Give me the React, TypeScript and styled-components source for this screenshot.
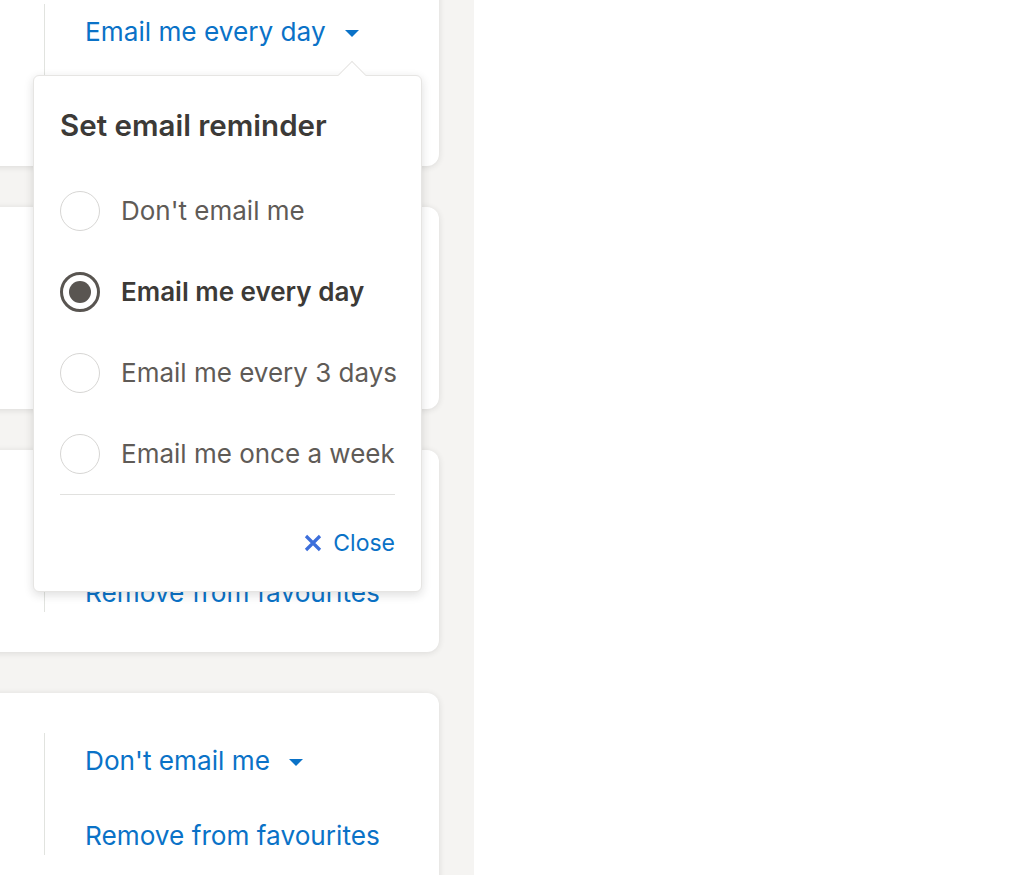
import React from "react";
import styled, { createGlobalStyle } from "styled-components";

const GlobalStyle = createGlobalStyle`
  html, body { margin: 0; padding: 0; background: #ffffff; }
  body { font-family: Inter, "Noto Sans", sans-serif; overflow: hidden; }
  * { box-sizing: border-box; }
`;

const Page = styled.div`
  display: flex;
  height: 875px;
  overflow: hidden;
  background: #ffffff;
`;

const Column = styled.div`
  width: 474px;
  flex: none;
  background: #f5f4f2;
  padding-right: 35px;
  display: flex;
  flex-direction: column;
  gap: 41px;
  margin-top: -36px;
`;

const Card = styled.div`
  margin-left: -24px;
  height: 202px;
  flex: none;
  background: #ffffff;
  border-radius: 12px;
  box-shadow: 0 1px 6px rgba(34, 34, 34, 0.12);
  padding: 40px 0 40px 68px;
  display: flex;
`;

const Actions = styled.div`
  position: relative;
  height: 122px;
  border-left: 1px solid #e1e3df;
  padding: 10px 0 1px 40px;
  display: flex;
  flex-direction: column;
  justify-content: space-between;
  align-items: flex-start;
`;

const LinkButton = styled.button`
  font-family: inherit;
  font-size: 26.2px;
  line-height: 36px;
  color: #0a72c7;
  background: none;
  border: 0;
  padding: 0;
  display: flex;
  align-items: center;
  gap: 19px;
  cursor: pointer;
  white-space: nowrap;
`;

const Caret = styled.span`
  width: 0;
  height: 0;
  border-left: 7px solid transparent;
  border-right: 7px solid transparent;
  border-top: 7px solid #0a72c7;
  margin-top: 3px;
`;

const Popover = styled.div`
  position: absolute;
  left: -12px;
  top: 71px;
  width: 389px;
  height: 517px;
  background: #ffffff;
  border: 1px solid #e6e5e3;
  border-radius: 6px;
  box-shadow: 0 3px 10px rgba(34, 34, 34, 0.15);
  padding: 29px 26px 0 26px;
  z-index: 5;
  display: flex;
  flex-direction: column;
`;

const Arrow = styled.span`
  position: absolute;
  top: -11px;
  left: 308px;
  width: 20px;
  height: 20px;
  background: #ffffff;
  border-top: 1px solid #e6e5e3;
  border-left: 1px solid #e6e5e3;
  transform: rotate(45deg);
`;

const Title = styled.h2`
  margin: 0;
  font-size: 29.5px;
  line-height: 40px;
  font-weight: 600;
  color: #3c3a37;
  white-space: nowrap;
`;

const Options = styled.div`
  margin-top: 46px;
  display: flex;
  flex-direction: column;
  gap: 41px;
  padding-bottom: 20px;
  border-bottom: 1px solid #e1e1df;
`;

const Option = styled.label`
  display: flex;
  align-items: center;
  gap: 21px;
  height: 40px;
  cursor: pointer;
`;

const Radio = styled.span<{ $checked?: boolean }>`
  width: 40px;
  height: 40px;
  flex: none;
  border-radius: 50%;
  border: ${(p) => (p.$checked ? "3px solid #595551" : "1px solid #d7d6d4")};
  display: flex;
  align-items: center;
  justify-content: center;
  &::after {
    content: "";
    display: ${(p) => (p.$checked ? "block" : "none")};
    width: 22px;
    height: 22px;
    border-radius: 50%;
    background: #595551;
  }
`;

const OptionText = styled.span<{ $checked?: boolean }>`
  font-size: 26px;
  line-height: 36px;
  white-space: nowrap;
  font-weight: ${(p) => (p.$checked ? 600 : 400)};
  color: ${(p) => (p.$checked ? "#3c3a37" : "#5f5b57")};
`;

const Footer = styled.div`
  display: flex;
  justify-content: flex-end;
  padding-top: 30px;
`;

const CloseButton = styled.button`
  font-family: inherit;
  font-size: 23px;
  line-height: 36px;
  color: #0a72c7;
  background: none;
  border: 0;
  padding: 0;
  display: flex;
  align-items: center;
  gap: 11px;
  cursor: pointer;
`;

const options = [
  "Don't email me",
  "Email me every day",
  "Email me every 3 days",
  "Email me once a week",
];

const cards = ["Email me every day", "Email me every day", "Email me every day", "Don't email me"];

export default function App() {
  return (
    <>
      <GlobalStyle />
      <Page>
        <Column>
          {cards.map((label, i) => (
            <Card key={i}>
              <Actions>
                <LinkButton>
                  {label}
                  <Caret />
                </LinkButton>
                <LinkButton>Remove from favourites</LinkButton>
                {i === 0 && (
                  <Popover>
                    <Arrow />
                    <Title>Set email reminder</Title>
                    <Options>
                      {options.map((o) => {
                        const checked = o === "Email me every day";
                        return (
                          <Option key={o}>
                            <Radio $checked={checked} />
                            <OptionText $checked={checked}>{o}</OptionText>
                          </Option>
                        );
                      })}
                    </Options>
                    <Footer>
                      <CloseButton>
                        <svg width="18" height="18" viewBox="0 0 18 18" fill="none">
                          <path d="M2 2 L16 16 M16 2 L2 16" stroke="#3d6fdb" strokeWidth="3.2" strokeLinecap="butt" />
                        </svg>
                        Close
                      </CloseButton>
                    </Footer>
                  </Popover>
                )}
              </Actions>
            </Card>
          ))}
        </Column>
      </Page>
    </>
  );
}
